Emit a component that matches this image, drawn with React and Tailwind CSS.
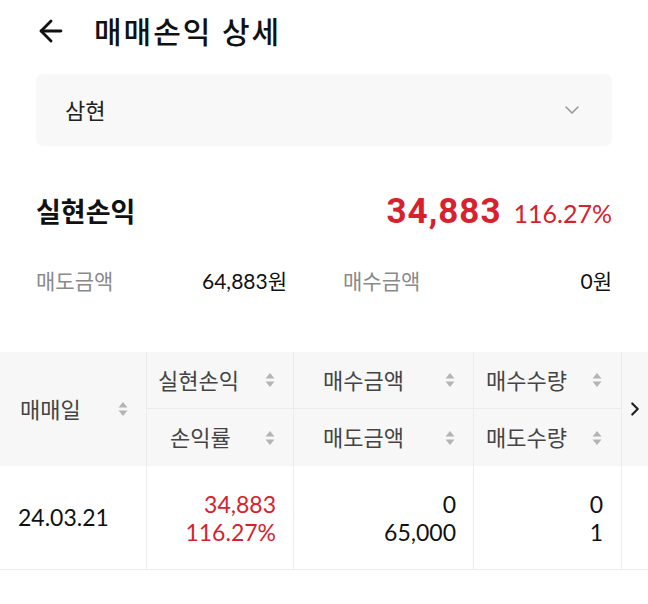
import { ChevronDown, ChevronRight, ArrowLeft } from 'lucide-react';

const font = { fontFamily: "Lato, 'Noto Sans CJK KR', sans-serif" };

const SortIcon = () => (
  <svg width="10" height="20" viewBox="0 0 10 20" className="shrink-0">
    <path d="M5 3 L9.5 8.5 H0.5 Z" fill="#b4b4b4" />
    <path d="M5 17 L9.5 11.5 H0.5 Z" fill="#b4b4b4" />
  </svg>
);

const HeadCell = ({ label, className = '' }) => (
  <div className={`flex items-center justify-between ${className}`}>
    <span>{label}</span>
    <SortIcon />
  </div>
);

const App = () => {
  return (
    <div className="w-[648px] h-[604px] bg-white text-[#111] overflow-hidden" style={font}>
      {/* Header */}
      <div className="flex items-center h-[62px] pl-[34px]">
        <ArrowLeft size={34} strokeWidth={2} className="text-[#111]" />
        <h1 className="ml-[26px] text-[30px] font-medium tracking-[2px]">매매손익 상세</h1>
      </div>

      {/* Select */}
      <div className="mx-[36px] mt-[12px] h-[72px] rounded-[7px] bg-[#f8f8f8] flex items-center justify-between pl-[29px] pr-[28px]">
        <span className="text-[22px] text-[#222]">삼현</span>
        <ChevronDown size={24} strokeWidth={1.6} className="text-[#999]" />
      </div>

      {/* Summary */}
      <div className="mx-[36px] mt-[40px] flex items-center justify-between">
        <span className="text-[27px] font-bold">실현손익</span>
        <div className="flex items-baseline gap-[12px] text-[#d7222d]">
          <span className="text-[35px] font-bold tracking-[1px] font-['Roboto']">34,883</span>
          <span className="text-[25px]">116.27%</span>
        </div>
      </div>

      <div className="mx-[36px] mt-[26px] flex text-[21px]">
        <div className="w-[251px] flex justify-between">
          <span className="text-[#8a8a8a]">매도금액</span>
          <span>64,883원</span>
        </div>
        <div className="ml-[56px] flex-1 flex justify-between">
          <span className="text-[#8a8a8a]">매수금액</span>
          <span>0원</span>
        </div>
      </div>

      {/* Table */}
      <div className="mt-[56px] grid grid-cols-[147px_147px_180px_148px_26px] text-[22px]">
        {/* header */}
        <div className="row-span-2 bg-[#f7f7f7] border-r border-[#ececec] flex items-center">
          <HeadCell label="매매일" className="w-full pl-[20px] pr-[18px] text-[#444]" />
        </div>
        <div className="h-[57px] bg-[#f7f7f7] border-r border-b border-[#ececec] flex items-center">
          <HeadCell label="실현손익" className="w-full pl-[11px] pr-[18px] text-[#444]" />
        </div>
        <div className="h-[57px] bg-[#f7f7f7] border-r border-b border-[#ececec] flex items-center">
          <HeadCell label="매수금액" className="w-full pl-[29px] pr-[18px] text-[#444]" />
        </div>
        <div className="h-[57px] bg-[#f7f7f7] border-r border-b border-[#ececec] flex items-center">
          <HeadCell label="매수수량" className="w-full pl-[12px] pr-[19px] text-[#444]" />
        </div>
        <div className="row-span-2 bg-[#f7f7f7] flex items-center justify-end pr-[2px]">
          <ChevronRight size={22} strokeWidth={2.4} className="text-[#222]" />
        </div>
        <div className="h-[57px] bg-[#f7f7f7] border-r border-[#ececec] flex items-center">
          <HeadCell label="손익률" className="w-full pl-[23px] pr-[18px] text-[#444]" />
        </div>
        <div className="h-[57px] bg-[#f7f7f7] border-r border-[#ececec] flex items-center">
          <HeadCell label="매도금액" className="w-full pl-[29px] pr-[18px] text-[#444]" />
        </div>
        <div className="h-[57px] bg-[#f7f7f7] border-r border-[#ececec] flex items-center">
          <HeadCell label="매도수량" className="w-full pl-[12px] pr-[19px] text-[#444]" />
        </div>

        {/* body */}
        <div className="h-[104px] border-r border-b border-[#ececec] flex items-center pl-[18px] text-[23px]">
          24.03.21
        </div>
        <div className="h-[104px] border-r border-b border-[#ececec] flex flex-col justify-center items-end pr-[17px] text-[23px] leading-[28px] text-[#d7222d]">
          <span>34,883</span>
          <span>116.27%</span>
        </div>
        <div className="h-[104px] border-r border-b border-[#ececec] flex flex-col justify-center items-end pr-[17px] text-[23px] leading-[28px]">
          <span>0</span>
          <span>65,000</span>
        </div>
        <div className="h-[104px] border-r border-b border-[#ececec] flex flex-col justify-center items-end pr-[18px] text-[23px] leading-[28px]">
          <span>0</span>
          <span>1</span>
        </div>
        <div className="h-[104px] border-b border-[#ececec]" />
      </div>
    </div>
  );
};

export default App;
